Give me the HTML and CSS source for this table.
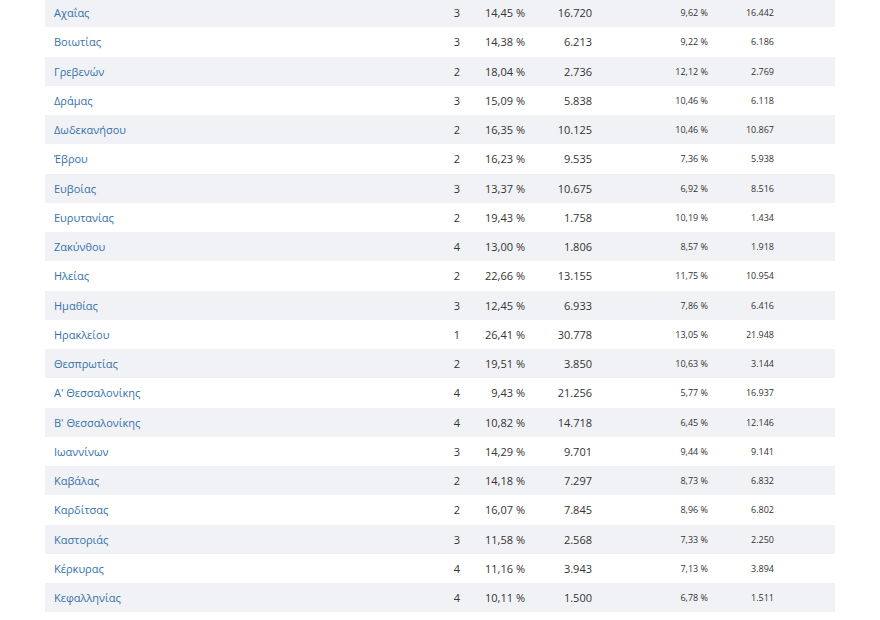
FILE: index.html
```html
<!DOCTYPE html>
<html lang="el">
<head>
<meta charset="utf-8">
<title>Περιφέρειες</title>
<link rel="stylesheet" href="styles.css">
</head>
<body>
<div class="wrap">
<table class="results">
<colgroup>
<col class="c-name"><col class="c-seats"><col class="c-pct"><col class="c-votes"><col class="c-spct"><col class="c-svotes"><col class="c-end">
</colgroup>
<tbody>
<tr><td class="name">Αχαΐας</td><td class="num">3</td><td class="num">14,45 %</td><td class="num">16.720</td><td class="num sm">9,62 %</td><td class="num sm">16.442</td><td></td></tr>
<tr><td class="name">Βοιωτίας</td><td class="num">3</td><td class="num">14,38 %</td><td class="num">6.213</td><td class="num sm">9,22 %</td><td class="num sm">6.186</td><td></td></tr>
<tr><td class="name">Γρεβενών</td><td class="num">2</td><td class="num">18,04 %</td><td class="num">2.736</td><td class="num sm">12,12 %</td><td class="num sm">2.769</td><td></td></tr>
<tr><td class="name">Δράμας</td><td class="num">3</td><td class="num">15,09 %</td><td class="num">5.838</td><td class="num sm">10,46 %</td><td class="num sm">6.118</td><td></td></tr>
<tr><td class="name">Δωδεκανήσου</td><td class="num">2</td><td class="num">16,35 %</td><td class="num">10.125</td><td class="num sm">10,46 %</td><td class="num sm">10.867</td><td></td></tr>
<tr><td class="name">Έβρου</td><td class="num">2</td><td class="num">16,23 %</td><td class="num">9.535</td><td class="num sm">7,36 %</td><td class="num sm">5.938</td><td></td></tr>
<tr><td class="name">Ευβοίας</td><td class="num">3</td><td class="num">13,37 %</td><td class="num">10.675</td><td class="num sm">6,92 %</td><td class="num sm">8.516</td><td></td></tr>
<tr><td class="name">Ευρυτανίας</td><td class="num">2</td><td class="num">19,43 %</td><td class="num">1.758</td><td class="num sm">10,19 %</td><td class="num sm">1.434</td><td></td></tr>
<tr><td class="name">Ζακύνθου</td><td class="num">4</td><td class="num">13,00 %</td><td class="num">1.806</td><td class="num sm">8,57 %</td><td class="num sm">1.918</td><td></td></tr>
<tr><td class="name">Ηλείας</td><td class="num">2</td><td class="num">22,66 %</td><td class="num">13.155</td><td class="num sm">11,75 %</td><td class="num sm">10.954</td><td></td></tr>
<tr><td class="name">Ημαθίας</td><td class="num">3</td><td class="num">12,45 %</td><td class="num">6.933</td><td class="num sm">7,86 %</td><td class="num sm">6.416</td><td></td></tr>
<tr><td class="name">Ηρακλείου</td><td class="num">1</td><td class="num">26,41 %</td><td class="num">30.778</td><td class="num sm">13,05 %</td><td class="num sm">21.948</td><td></td></tr>
<tr><td class="name">Θεσπρωτίας</td><td class="num">2</td><td class="num">19,51 %</td><td class="num">3.850</td><td class="num sm">10,63 %</td><td class="num sm">3.144</td><td></td></tr>
<tr><td class="name">Α' Θεσσαλονίκης</td><td class="num">4</td><td class="num">9,43 %</td><td class="num">21.256</td><td class="num sm">5,77 %</td><td class="num sm">16.937</td><td></td></tr>
<tr><td class="name">Β' Θεσσαλονίκης</td><td class="num">4</td><td class="num">10,82 %</td><td class="num">14.718</td><td class="num sm">6,45 %</td><td class="num sm">12.146</td><td></td></tr>
<tr><td class="name">Ιωαννίνων</td><td class="num">3</td><td class="num">14,29 %</td><td class="num">9.701</td><td class="num sm">9,44 %</td><td class="num sm">9.141</td><td></td></tr>
<tr><td class="name">Καβάλας</td><td class="num">2</td><td class="num">14,18 %</td><td class="num">7.297</td><td class="num sm">8,73 %</td><td class="num sm">6.832</td><td></td></tr>
<tr><td class="name">Καρδίτσας</td><td class="num">2</td><td class="num">16,07 %</td><td class="num">7.845</td><td class="num sm">8,96 %</td><td class="num sm">6.802</td><td></td></tr>
<tr><td class="name">Καστοριάς</td><td class="num">3</td><td class="num">11,58 %</td><td class="num">2.568</td><td class="num sm">7,33 %</td><td class="num sm">2.250</td><td></td></tr>
<tr><td class="name">Κέρκυρας</td><td class="num">4</td><td class="num">11,16 %</td><td class="num">3.943</td><td class="num sm">7,13 %</td><td class="num sm">3.894</td><td></td></tr>
<tr><td class="name">Κεφαλληνίας</td><td class="num">4</td><td class="num">10,11 %</td><td class="num">1.500</td><td class="num sm">6,78 %</td><td class="num sm">1.511</td><td></td></tr>
</tbody>
</table>
</div>
</body>
</html>
```
FILE: styles.css
```css
html, body {
  margin: 0;
  padding: 0;
  background: #ffffff;
}
body {
  font-family: "Open Sans", "Noto Sans", sans-serif;
  color: #333333;
  overflow: hidden;
}
.wrap {
  margin: -2px 0 0 45px;
  width: 790px;
}
.results {
  width: 790px;
  border-collapse: collapse;
  table-layout: fixed;
}
.c-name { width: 375px; }
.c-seats { width: 48px; }
.c-pct { width: 65px; }
.c-votes { width: 67px; }
.c-spct { width: 116px; }
.c-svotes { width: 66px; }
.c-end { width: 53px; }
.results tr {
  height: 29.25px;
}
.results tr:nth-child(odd) {
  background: #f1f2f5;
}
.results td {
  padding: 1px 8px 0;
  vertical-align: middle;
  white-space: nowrap;
  font-size: 11px;
  line-height: 16px;
}
.results td.name {
  padding-left: 9px;
  color: #3571ad;
  font-size: 11px;
}
.results td.num {
  text-align: right;
}
.results td.sm {
  font-size: 9px;
}
```
